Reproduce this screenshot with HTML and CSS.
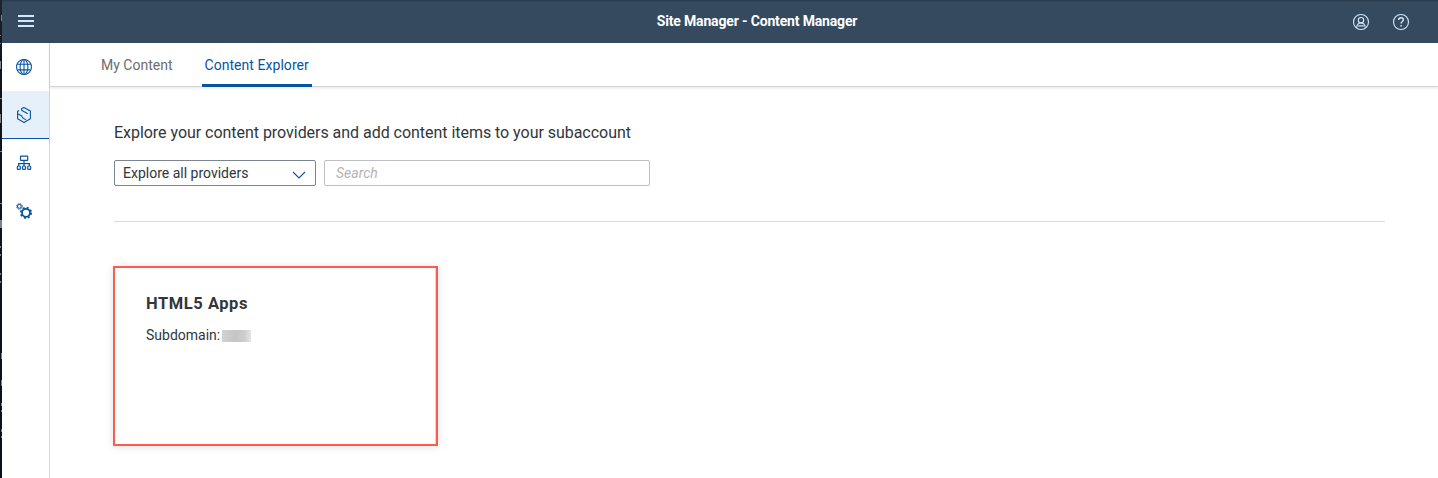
FILE: index.html
```html
<!DOCTYPE html>
<html lang="en">
<head>
<meta charset="utf-8">
<title>Site Manager - Content Manager</title>
<link rel="stylesheet" href="styles.css">
</head>
<body>
<div class="page">
  <div class="edge">
    <svg width="2" height="478" viewBox="0 0 2 478" fill="#7d8188"><path d="M1 15h1v6H1zM0 35h1v1H0zM0 43h1v1H0zM0 61h1v8H0zM0 98h2v1H0zM0 114h1v9H0zM0 151h2v1H0zM0 203h2v1H0zM0 220h2v8H0zM0 246h1v2H0zM0 254h1v2H0zM0 273h1v2H0zM0 281h1v2H0zM1 353h1v6H1zM1 380h1v6H1zM1 403h1v3H1zM1 410h1v2H1zM1 429h1v3H1zM1 436h1v2H1z"/></svg>
  </div>
  <div class="app">
    <header class="shell">
      <button class="icon-button menu" aria-label="Menu">
        <svg width="16" height="14" viewBox="0 0 16 14" fill="currentColor"><path d="M0 1h16v2H0zM0 6h16v2H0zM0 11h16v2H0z"/></svg>
      </button>
      <h1 class="shell-title">Site Manager - Content Manager</h1>
      <div class="shell-actions">
        <button class="icon-button" aria-label="User">
          <svg width="18" height="18" viewBox="0 0 18 18" fill="none" stroke="currentColor" stroke-width="1.1"><circle cx="9" cy="9" r="7.500"/><circle cx="9" cy="7.200" r="2.700"/><path d="M4.700 14.600C4.900 11.800 6.700 10 9 10s4.100 1.800 4.300 4.600M6.200 12.900h5.600"/></svg>
        </button>
        <button class="icon-button" aria-label="Help">
          <svg width="18" height="18" viewBox="0 0 18 18" fill="none" stroke="currentColor" stroke-width="1.100"><circle cx="9" cy="9" r="7.500"/><path d="M6.600 6.900C6.600 5.500 7.600 4.700 9 4.700s2.400.8 2.400 2.100c0 1.700-2.300 1.600-2.300 3.700" stroke-width="1.400"/><path d="M9.100 11.900v1.600" stroke-width="1.500"/></svg>
        </button>
      </div>
    </header>
    <div class="body">
      <nav class="side">
        <a class="side-item">
          <svg width="18" height="18" viewBox="0 0 18 18" fill="none" stroke="currentColor" stroke-width="1.100"><circle cx="9" cy="9" r="7.500"/><ellipse cx="9" cy="9" rx="3.900" ry="7.500"/><path d="M9 1.500v15M2.300 6.200h13.400M2.300 11.900h13.400"/></svg>
        </a>
        <a class="side-item selected">
          <svg width="18" height="18" viewBox="0 0 18 18" fill="none" stroke="currentColor" stroke-width="1.100" stroke-linejoin="round" stroke-linecap="round"><path d="M6.600 2.800 8.900 1.600 15.400 5v7.800L9 16.400 2.600 12.800V5.200l1.200-.5M6.600 2.800v1.500l5.800 3.200M3.200 8.100l3.200 1.700c1 .6.500 1.500 1.500 2.200l2.700 1.600"/></svg>
        </a>
        <a class="side-item">
          <svg width="18" height="18" viewBox="0 0 18 18" fill="none" stroke="currentColor" stroke-width="1.200"><rect x="5.500" y="2.100" width="7.200" height="4.300" rx=".4"/><path d="M9 6.400V12M3.600 12V9.600h10.800V12"/><rect x="2.300" y="12" width="3" height="3.300" rx=".9"/><rect x="7.500" y="12" width="3" height="3.300" rx=".9"/><rect x="12.700" y="12" width="3" height="3.300" rx=".9"/></svg>
        </a>
        <a class="side-item">
          <svg width="18" height="18" viewBox="0 0 18 18" fill="none" stroke="currentColor"><circle cx="11" cy="10.800" r="4" stroke-width="1.800"/><circle cx="11" cy="10.800" r="5.200" stroke-width="1.800" stroke-dasharray="2.040 2.040"/><circle cx="4.400" cy="4.400" r="1.900" stroke-width="1.100"/><circle cx="4.400" cy="4.400" r="2.900" stroke-width="1" stroke-dasharray="1.140 1.140"/></svg>
        </a>
      </nav>
      <main class="main">
        <div class="tabs">
          <a class="tab tab-my"><span>My Content</span></a>
          <a class="tab tab-explorer active"><span>Content Explorer</span></a>
        </div>
        <section class="content">
          <h2 class="intro">Explore your content providers and add content items to your subaccount</h2>
          <div class="filters">
            <div class="select"><span>Explore all providers</span>
              <svg width="14" height="8" viewBox="0 0 14 8" fill="none" stroke="currentColor" stroke-width="1.100"><path d="m1 1 6 6 6-6"/></svg>
            </div>
            <input class="search" placeholder="Search" aria-label="Search">
          </div>
          <article class="card">
            <h3 class="card-title">HTML5 Apps</h3>
            <p class="card-text"><span>Subdomain:</span><i class="redacted"></i></p>
          </article>
        </section>
      </main>
    </div>
  </div>
</div>
</body>
</html>
```
FILE: styles.css
```css
* { box-sizing: border-box; }
body { margin: 0; background: #fff; color: #32363a; font: 14px/18px Roboto, "Noto Sans", sans-serif; }
h1, h2, h3, p { margin: 0; }
button { padding: 0; border: 0; background: none; color: inherit; }
svg { display: block; }
.page { display: flex; height: 478px; overflow: hidden; }
.edge { width: 2px; background: linear-gradient(#20242c, #10151c 60px, #0b1016); }
.app { flex: 1; display: flex; flex-direction: column; }
.shell { height: 43px; padding: 0 28px 0 15px; display: grid; grid-template-columns: 80px 1fr 80px; align-items: center; background: #354a5f; border-top: 1px solid #2c3d4f; color: #d1e8ff; box-shadow: inset 0 1px #304357; }
.icon-button { width: 18px; height: 18px; display: grid; place-items: center; }
.menu { margin-top: -2px; }
.shell-title { color: #fff; font-size: 14px; line-height: 18px; font-weight: 700; text-align: center; letter-spacing: -.16px; padding: 0 0 2px 87px; }
.shell-actions { margin-top: -1px; display: flex; justify-content: flex-end; gap: 22px; }
.body { flex: 1; display: flex; }
.side { width: 48px; border-right: 1px solid #d5d5d5; color: #0854a0; }
.side-item { height: 48px; display: grid; place-items: center; padding-right: 3px; }
.side-item.selected { background: #e5f0fa; border-bottom: 1px solid #0854a0; }
.main { flex: 1; }
.tabs { height: 44px; padding-left: 49px; display: flex; gap: 28px; border-bottom: 1px solid #d5d5d5; box-shadow: 0 1px 3px rgba(0,0,0,.1); }
.tab { height: 44px; padding: 13px 2px 0; color: #6a6d70; border-bottom: 3px solid transparent; white-space: nowrap; }
.tab.active { color: #0854a0; border-color: #0854a0; border-radius: 2px 2px 0 0; letter-spacing: .05px; }
.tab-explorer { width: 110px; }
.content { padding: 34px 53px 0 64px; }
.intro { font-size: 16px; line-height: 24px; font-weight: 400; letter-spacing: -.035px; }
.filters { display: flex; gap: 8px; padding: 15px 0 35px; border-bottom: 1px solid #d9d9d9; }
.select { width: 202px; height: 26px; padding: 0 9px 0 8px; display: flex; align-items: center; justify-content: space-between; border: 1px solid #7b858f; border-radius: 2px; }
.select svg { color: #0854a0; margin-top: 3px; }
.search { width: 326px; height: 26px; padding: 0 11px; border: 1px solid #bfbfc3; border-radius: 2px; font: inherit; }
.search::placeholder { color: #b3b4b6; font-style: italic; opacity: 1; }
.card { width: 325px; height: 180px; margin-top: 44px; margin-left: -1px; padding: 24px 31px; border: 2px solid #ff5a4b; box-shadow: inset -1px 0 #d9dadb, 0 1px 8px rgba(0,0,0,.12); }
.card-title { font-size: 16.5px; line-height: 24px; font-weight: 700; letter-spacing: .55px; }
.card-text { margin-top: 10px; display: flex; align-items: center; gap: 2px; }
.redacted { width: 29px; height: 12px; margin-top: 2px; background: linear-gradient(90deg, #d2d2d2, #c5c5c5 45%, #cdcdcd 75%, #e4e4e4); }
```
